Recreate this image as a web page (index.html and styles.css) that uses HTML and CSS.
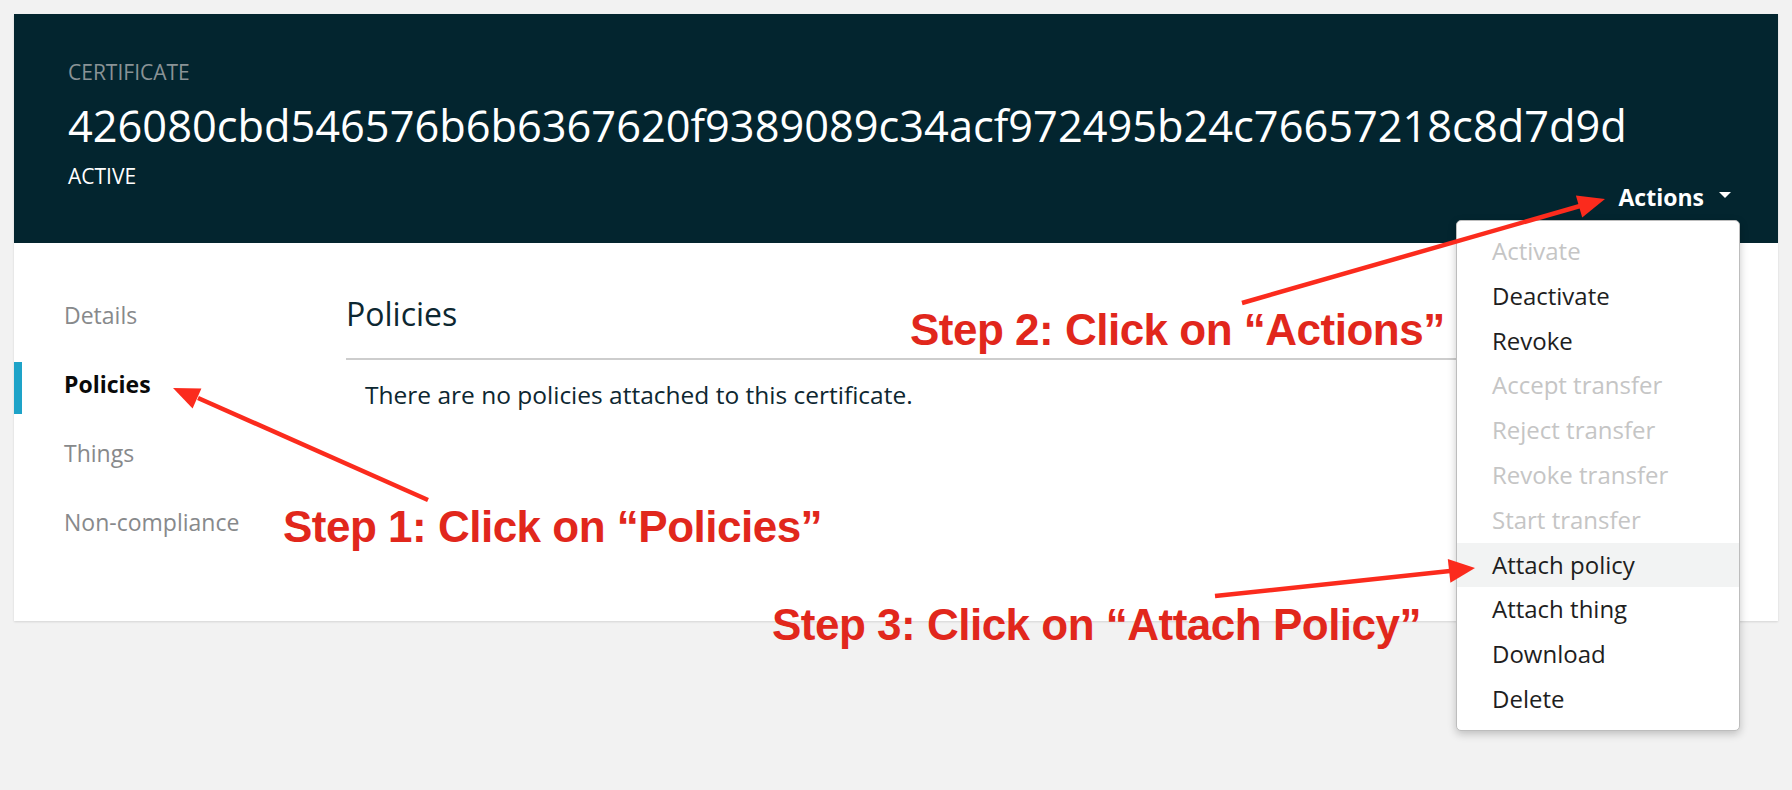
FILE: index.html
```html
<!DOCTYPE html>
<html lang="en">
<head>
<meta charset="utf-8">
<title>Certificate</title>
<link rel="stylesheet" href="styles.css">
</head>
<body>
<div class="card">
  <header class="cert-header">
    <div class="cert-info">
      <div class="cert-label">CERTIFICATE</div>
      <h1 class="cert-id">426080cbd546576b6b6367620f9389089c34acf972495b24c76657218c8d7d9d</h1>
      <div class="cert-status">ACTIVE</div>
    </div>
    <div class="actions">
      <button class="actions-btn" type="button">Actions<svg class="caret" width="12" height="6" viewBox="0 0 12 6"><path d="M0 0h12L6 6z" fill="#ffffff"/></svg></button>
      <ul class="menu">
        <li class="menu-item disabled">Activate</li>
        <li class="menu-item">Deactivate</li>
        <li class="menu-item">Revoke</li>
        <li class="menu-item disabled">Accept transfer</li>
        <li class="menu-item disabled">Reject transfer</li>
        <li class="menu-item disabled">Revoke transfer</li>
        <li class="menu-item disabled">Start transfer</li>
        <li class="menu-item hover">Attach policy</li>
        <li class="menu-item">Attach thing</li>
        <li class="menu-item">Download</li>
        <li class="menu-item">Delete</li>
      </ul>
    </div>
  </header>
  <div class="card-body">
    <nav class="side-nav">
      <a class="nav-item">Details</a>
      <a class="nav-item active">Policies</a>
      <a class="nav-item">Things</a>
      <a class="nav-item">Non-compliance</a>
    </nav>
    <main class="content">
      <h2 class="content-title">Policies</h2>
      <p class="empty-text">There are no policies attached to this certificate.</p>
    </main>
  </div>
</div>

<div class="annotations">
  <svg class="arrows" width="1792" height="790" viewBox="0 0 1792 790">
    <g stroke="#fb2b1d" stroke-width="4.5" fill="none">
      <line x1="428" y1="500" x2="198" y2="398"/>
      <line x1="1242" y1="303" x2="1580" y2="206"/>
      <line x1="1215" y1="596" x2="1450" y2="571"/>
    </g>
    <g fill="#fb2b1d">
      <polygon points="173,388 201.4,388.4 192.6,408.6"/>
      <polygon points="1605,199 1582.2,217.5 1575.9,195.4"/>
      <polygon points="1475,568 1450.4,582.7 1447.8,558.9"/>
    </g>
  </svg>
  <div class="step step-1">Step 1: Click on “Policies”</div>
  <div class="step step-2">Step 2: Click on “Actions”</div>
  <div class="step step-3">Step 3: Click on “Attach Policy”</div>
</div>
</body>
</html>
```

FILE: styles.css
```css
* {
  box-sizing: border-box;
}

html, body {
  margin: 0;
  padding: 0;
}

body {
  background: #f2f2f2;
  font-family: "Open Sans", "Noto Sans", sans-serif;
  padding: 14px;
  width: 1792px;
  height: 790px;
  overflow: hidden;
  position: relative;
}

.card {
  background: #ffffff;
  box-shadow: 0 1px 2px rgba(0, 0, 0, 0.12);
}

/* Header */
.cert-header {
  background: #03252f;
  display: flex;
  justify-content: space-between;
  padding: 44px 47px 0 54px;
}

.cert-info {
  flex: 1 1 auto;
  min-width: 0;
  padding-bottom: 53px;
}

.cert-label {
  color: #8a9396;
  font-size: 21px;
  line-height: 28px;
}

.cert-id {
  margin: 11px 0 0;
  color: #ffffff;
  font-weight: 400;
  font-size: 43.35px;
  line-height: 58px;
  white-space: nowrap;
}

.cert-status {
  margin-top: 7px;
  color: #ffffff;
  font-size: 21px;
  line-height: 28px;
}

.actions {
  position: relative;
  flex-shrink: 0;
  align-self: flex-end;
  margin-bottom: 30px;
}

.actions-btn {
  display: inline-flex;
  align-items: center;
  background: none;
  border: 0;
  padding: 0;
  color: #ffffff;
  font-family: "Open Sans", "Noto Sans", sans-serif;
  font-weight: 700;
  font-size: 23px;
  line-height: 32px;
  height: 32px;
}

.caret {
  margin-left: 15px;
  margin-bottom: 5px;
}

.menu {
  position: absolute;
  top: calc(100% + 7px);
  right: -9px;
  width: 284px;
  margin: 0;
  padding: 8px 0;
  list-style: none;
  background: #ffffff;
  border: 1px solid #bdbdbd;
  border-radius: 5px;
  box-shadow: 0 3px 8px rgba(0, 0, 0, 0.22);
  z-index: 5;
}

.menu-item {
  height: 44.8px;
  line-height: 44.8px;
  padding-left: 35px;
  font-size: 24px;
  color: #1e1e1e;
  white-space: nowrap;
}

.menu-item.disabled {
  color: #c5c5c5;
}

.menu-item.hover {
  background: #f2f3f3;
}

/* Body */
.card-body {
  display: flex;
  padding: 50px 0 69px;
}

.side-nav {
  width: 332px;
  flex-shrink: 0;
  display: flex;
  flex-direction: column;
  gap: 17px;
}

.nav-item {
  display: block;
  height: 52px;
  line-height: 45px;
  padding: 0 0 7px 50px;
  font-size: 23px;
  color: #87898b;
}

.nav-item.active {
  border-left: 8px solid #1ea3c8;
  padding-left: 42px;
  font-weight: 700;
  color: #0a0a0a;
}

.content {
  flex: 1;
  padding-right: 65px;
}

.content-title {
  margin: 0;
  font-weight: 400;
  font-size: 32px;
  line-height: 42px;
  color: #0d2731;
  padding-bottom: 23px;
  border-bottom: 2px solid #cdcdcd;
}

.empty-text {
  margin: 19px 0 0;
  padding-left: 19px;
  font-size: 24.5px;
  line-height: 32px;
  color: #0d2731;
}

/* Annotations */
.annotations {
  position: absolute;
  left: 0;
  top: 0;
  width: 1792px;
  height: 790px;
  pointer-events: none;
  z-index: 10;
}

.arrows {
  position: absolute;
  left: 0;
  top: 0;
}

.step {
  position: absolute;
  font-family: "Liberation Sans", Arial, sans-serif;
  font-weight: 700;
  font-size: 44px;
  line-height: 44px;
  letter-spacing: -0.5px;
  color: #e1271c;
  white-space: nowrap;
}

.step-1 {
  left: 283px;
  top: 505px;
}

.step-2 {
  left: 910px;
  top: 308px;
}

.step-3 {
  left: 772px;
  top: 603px;
}
```
